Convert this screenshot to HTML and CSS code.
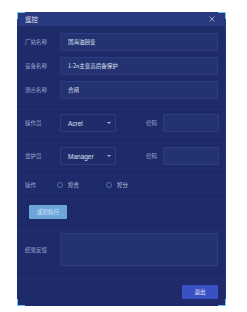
FILE: index.html
```html
<!DOCTYPE html>
<html lang="zh-CN">
<head>
    <meta charset="UTF-8">
    <title>遥控</title>
    <link rel="stylesheet" href="styles.css">
</head>
<body>
    <div class="dialog">
        <span class="corner tl"></span>
        <span class="corner tr"></span>
        <span class="corner bl"></span>
        <span class="corner br"></span>

        <div class="dialog-head">
            <span class="title">遥控</span>
            <svg class="close" width="6" height="6" viewBox="0 0 6 6">
                <path d="M0.5 0.5 L5.5 5.5 M5.5 0.5 L0.5 5.5" stroke="#aab4da" stroke-width="0.9" fill="none"/>
            </svg>
        </div>

        <div class="section info">
            <div class="row">
                <span class="label">厂站名称</span>
                <div class="box">国海油顾变</div>
            </div>
            <div class="row">
                <span class="label">设备名称</span>
                <div class="box">1-2n主变高后备保护</div>
            </div>
            <div class="row">
                <span class="label">测点名称</span>
                <div class="box">合闸</div>
            </div>
        </div>

        <div class="section">
            <div class="row">
                <span class="label">操作员</span>
                <div class="box select">Acrel<span class="caret"></span></div>
                <span class="label pwd">密码</span>
                <div class="box small"></div>
            </div>
        </div>

        <div class="section">
            <div class="row">
                <span class="label">监护员</span>
                <div class="box select">Manager<span class="caret"></span></div>
                <span class="label pwd">密码</span>
                <div class="box small"></div>
            </div>
        </div>

        <div class="section ops">
            <span class="label">操作</span>
            <label class="radio"><span class="dot"></span>控合</label>
            <label class="radio"><span class="dot"></span>控分</label>
        </div>

        <div class="section run">
            <button class="btn btn-run">遥控执行</button>
        </div>

        <div class="section result">
            <span class="label">结果反馈</span>
            <div class="box area"></div>
        </div>

        <div class="dialog-foot">
            <button class="btn btn-exit">退出</button>
        </div>
    </div>
</body>
</html>
```

FILE: styles.css
```css
body {
    margin: 0;
    background-color: #ffffff;
    font-family: "Noto Sans CJK SC", "Liberation Sans", sans-serif;
}
.dialog {
    position: relative;
    width: 209px;
    margin: 12px 0 0 17px;
    background-color: #1e2a69;
    border-right: 1px solid #2b3a88;
    box-sizing: border-box;
}
.corner {
    position: absolute;
    width: 7px;
    height: 6px;
    border-color: #6cc6ee;
    border-style: solid;
    border-width: 0;
}
.corner.tl { top: 0; left: 0; border-top-width: 1px; border-left-width: 1px; }
.corner.tr { top: 0; right: -1px; border-top-width: 1px; border-right-width: 1px; }
.corner.bl { bottom: 0; left: 0; border-bottom-width: 1px; border-left-width: 1px; }
.corner.br { bottom: 0; right: -1px; border-bottom-width: 1px; border-right-width: 1px; }

.dialog-head {
    height: 14px;
    background-color: #29397f;
    display: flex;
    align-items: center;
    justify-content: space-between;
    padding: 0 10px 0 8px;
}
.title {
    color: #e4e8f6;
    font-size: 6.5px;
}
.close {
    display: block;
}

.section {
    padding: 7px 7px 7px 8px;
    border-bottom: 1px solid #1a255e;
}
.info {
    display: flex;
    flex-direction: column;
    gap: 6px;
}
.row {
    display: flex;
    align-items: center;
    height: 18px;
}
.label {
    width: 35px;
    flex: none;
    color: #9ea8cf;
    font-size: 5.5px;
}
.label.pwd {
    width: 17px;
    margin-left: 30px;
}
.box {
    flex: 1;
    height: 18px;
    box-sizing: border-box;
    background-color: #243271;
    border: 1px solid #2e3d80;
    border-radius: 1px;
    color: #dde1f2;
    font-size: 5.5px;
    display: flex;
    align-items: center;
    padding-left: 7px;
}
.select {
    flex: none;
    width: 56px;
    background-color: #1f2b6a;
    font-family: "Liberation Sans", sans-serif;
    font-size: 6.5px;
    position: relative;
}
.caret {
    position: absolute;
    right: 4px;
    top: 7px;
    border-left: 2px solid transparent;
    border-right: 2px solid transparent;
    border-top: 2px solid #aab3d6;
}
.box.small {
    flex: none;
    width: 56px;
}

.ops {
    display: flex;
    align-items: center;
    height: 10px;
    padding-bottom: 6px;
}
.radio {
    display: flex;
    align-items: center;
    gap: 5px;
    color: #c6cce6;
    font-size: 5.5px;
    width: 52px;
    margin-left: -3px;
}
.dot {
    width: 6px;
    height: 6px;
    box-sizing: border-box;
    border: 1px solid #4f6fb8;
    border-radius: 50%;
}

.run {
    padding: 8px 7px 6px 12px;
}
.btn {
    border: none;
    border-radius: 1px;
    font-family: "Noto Sans CJK SC", sans-serif;
    font-size: 5.5px;
    padding: 0;
    height: 14px;
    display: block;
}
.btn-run {
    width: 38px;
    background-color: #6ea6dc;
    color: #d6e8f8;
}

.result {
    display: flex;
    align-items: center;
}
.box.area {
    height: 33px;
}

.dialog-foot {
    display: flex;
    justify-content: flex-end;
    padding: 11px 7px 7px;
}
.btn-exit {
    width: 36px;
    background-color: #3a51c2;
    color: #e6eaff;
}
```
